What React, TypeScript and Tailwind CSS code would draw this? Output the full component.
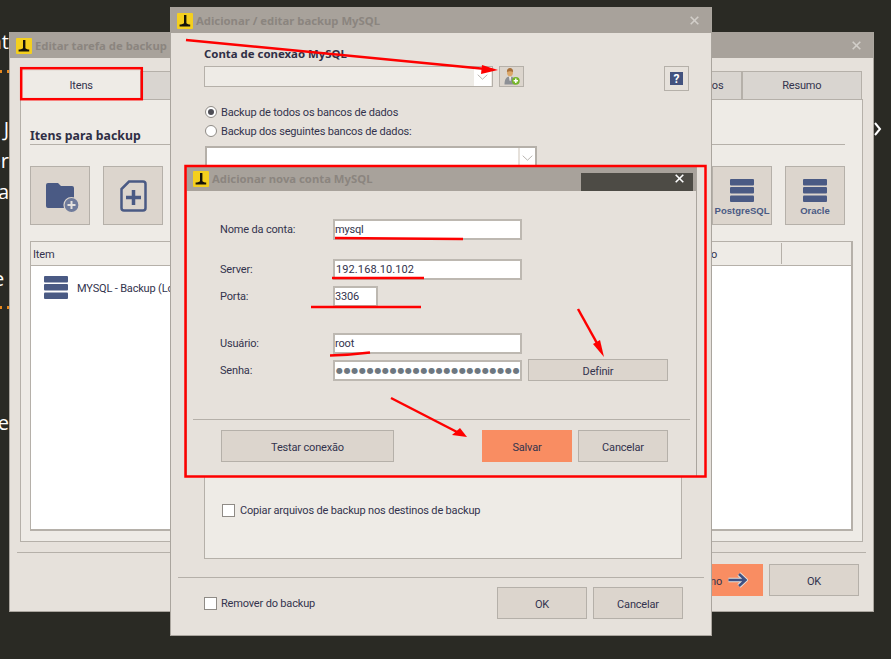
import React from "react";

const Logo = () => (
  <svg width="16" height="16" viewBox="0 0 16 16" className="shrink-0">
    <rect width="16" height="16" rx="1" fill="#f4cf1e" />
    <path d="M7 2h2.400v8.200c1 .8 2.400 1.200 3.800 1.300V13.600H2.600v-2.100c1.500-.1 3.400-.5 4.400-1.300z" fill="#15130b" />
  </svg>
);

const Db = () => (
  <svg width="24" height="23" viewBox="0 0 24 23" className="block">
    <rect x="0" y="0" width="24" height="6.500" rx="1" fill="#4a5a84" />
    <rect x="0" y="8" width="24" height="6.500" rx="1" fill="#4a5a84" />
    <rect x="0" y="16.500" width="24" height="6.500" rx="1" fill="#4a5a84" />
  </svg>
);

const Close = ({ c = "#d2cec9" }: { c?: string }) => (
  <svg width="9" height="9" viewBox="0 0 9 9" className="block">
    <path d="M.7.7l7.600 7.600M8.300.7L.7 8.300" stroke={c} strokeWidth="1.600" />
  </svg>
);

function Win({ title, className, barH, children, close = true }: { title: string; className: string; barH: string; children: React.ReactNode; close?: boolean }) {
  return (
    <div className={`absolute flex flex-col bg-[#e6e1db] border-r border-b border-l border-[#aaa59e] ${className}`}>
      <div className={`flex items-center pl-[6px] pr-[12px] bg-[#a8a29b] shrink-0 ${barH}`}>
        <Logo />
        <span className="ml-[3px] flex-1 text-[11.300px] tracking-normal font-bold text-[#8b857f] whitespace-nowrap font-['Noto_Sans',sans-serif]">{title}</span>
        {close && <span className="block -mt-[2px]"><Close /></span>}
      </div>
      {children}
    </div>
  );
}

const Btn = ({ children, className = "" }: { children: React.ReactNode; className?: string }) => (
  <div className={`flex items-center justify-center border border-[#b5b0a9] bg-[#dcd5cd] pt-[2px] ${className}`}>{children}</div>
);

const Orange = ({ children, className = "" }: { children: React.ReactNode; className?: string }) => (
  <div className={`flex items-center bg-[#f98d62] pt-[2px] ${className}`}>{children}</div>
);

const Field = ({ label, children, className = "" }: { label: string; children: React.ReactNode; className?: string }) => (
  <div className={`flex items-start h-[21px] ${className}`}>
    <span className="w-[113px] pl-[33px] box-content shrink-0 leading-[21px]">{label}</span>
    {children}
  </div>
);

const Input = ({ children, className = "w-[189px]" }: { children?: React.ReactNode; className?: string }) => (
  <div className={`h-[21px] border-2 border-[#bdb8b1] bg-white flex items-center whitespace-nowrap overflow-hidden ${className}`}>{children}</div>
);

const Tab = ({ children }: { children?: React.ReactNode }) => (
  <div className="flex-1 border border-b-0 border-[#b5b0a9] bg-[#d9d5d0] flex items-center justify-center whitespace-nowrap">{children}</div>
);

const Chevron = () => (
  <svg width="11" height="6" viewBox="0 0 11 6"><path d="M.7.7l4.800 4.500L10.300.7" fill="none" stroke="#b9b5b0" strokeWidth="1" /></svg>
);

const Bg = ({ children, className }: { children?: React.ReactNode; className: string }) => (
  <div className={`flex justify-end whitespace-nowrap text-white text-[20px] tracking-normal leading-none ${className}`}>{children}</div>
);

const Dash = ({ className }: { className: string }) => (
  <div className={`flex justify-end gap-[5px] h-[3px] ${className}`}>
    <i className="block w-[3px] h-[3px] bg-[#e8891e]" />
    <i className="block w-[3px] h-[3px] bg-[#e8891e]" />
  </div>
);

const dbBtn = "w-[60px] h-[59px] flex-col !justify-start !pt-[12px] gap-[4px] text-[#4a5a84] text-[9.500px] tracking-normal font-bold font-['Liberation_Sans',sans-serif]";

export default function App() {
  return (
    <div className="relative w-[891px] h-[659px] overflow-hidden bg-[#2a2a24] text-[11px] tracking-[-.17px] leading-none text-[#33334d] font-['Roboto','Noto_Sans',sans-serif]">
      <div className="w-[9px] h-full overflow-hidden font-['Open_Sans',sans-serif]">
        <Bg className="pt-[32px]">nt</Bg>
        <Dash className="mt-[18px]" />
        <Bg className="mt-[46px]">J</Bg>
        <Bg className="mt-[12px]">er</Bg>
        <Bg className="mt-[11px]">ca</Bg>
        <Bg className="mt-[67px] justify-start -translate-x-[7px]">e</Bg>
        <Dash className="mt-[17px]" />
        <Bg className="mt-[104px]">le</Bg>
      </div>
      <svg width="9" height="14" viewBox="0 0 9 14" className="absolute left-[873px] top-[122px]">
        <path d="M2 1l5 6-5 6" fill="none" stroke="#fff" strokeWidth="2" />
      </svg>

      {/* back window */}
      <Win title="Editar tarefa de backup" className="left-[9px] top-[32px] w-[865px] h-[580px]" barH="h-[26px] pt-[2px]">
        <div className="px-[10px] pt-[13px] flex flex-col flex-1">
          <div className="flex h-[28px] pl-[2px] w-[842px]">
            <div className="flex-1 flex items-center justify-center bg-[#eeebe6]">Itens</div>
            <Tab>Destinos</Tab>
            <Tab>Agendamento</Tab>
            <Tab>Opções</Tab>
            <Tab>E-mail</Tab>
            <Tab>Outros processos</Tab>
            <Tab>Resumo</Tab>
          </div>
          <div className="w-[843px] h-[443px] border border-[#b5b0a9] bg-[#eeebe6] px-[9px]">
            <div className="w-[815px] mt-[29px] pb-[1px] h-[14px] border-b border-[#b5b0a9] text-[12.300px] tracking-normal font-bold leading-[14px] text-[#2f2f45] box-content font-['Noto_Sans',sans-serif]">Itens para backup</div>
            <div className="mt-[21px] flex gap-[13px] w-[815px]">
              <Btn className="w-[60px] h-[59px]">
                <svg width="33" height="31" viewBox="0 0 33 31" className="translate-x-[2px] translate-y-[1px]">
                  <path d="M0 3a2 2 0 012-2h10l3 3h11a2 2 0 012 2v20H2a2 2 0 01-2-2z" fill="#4a5a84" />
                  <circle cx="25.500" cy="23" r="7.500" fill="#6f7b9b" stroke="#dcd5cd" strokeWidth="1.200" />
                  <path d="M25.500 19v8M21.500 23h8" stroke="#e4e1de" strokeWidth="2" />
                </svg>
              </Btn>
              <Btn className="w-[60px] h-[59px]">
                <svg width="27" height="32" viewBox="0 0 27 32" className="-translate-y-[1px]">
                  <path d="M9 1.500h14a2.500 2.500 0 012.500 2.500v24a2.500 2.500 0 01-2.500 2.500H4A2.500 2.500 0 011.500 28V9z" fill="none" stroke="#4a5a84" strokeWidth="2.500" />
                  <path d="M13.500 10v15M6 17.500h15" stroke="#4a5a84" strokeWidth="3.500" />
                </svg>
              </Btn>
              <Btn className={`ml-auto ${dbBtn}`}>
                <Db /> <span>PostgreSQL</span>
              </Btn>
              <Btn className={dbBtn}>
                <Db /> <span>Oracle</span>
              </Btn>
            </div>
            <div className="mt-[16px] w-[823px] h-[290px] border-2 border-[#b5b0a9] border-t border-l flex flex-col bg-white">
              <div className="flex h-[24px] bg-[#eeebe6] border-b border-[#b5b0a9]">
                <div className="flex-1 flex items-center pl-[2px] pt-[2px]">Item</div>
                <div className="w-[89px] border-r border-[#b5b0a9] flex items-center pl-[3px] pt-[2px] my-[1px]">Tipo</div>
                <div className="w-[69px]" />
              </div>
              <div className="flex items-center pl-[13px] pt-[10px] gap-[9px]">
                <Db />
                <span className="whitespace-nowrap pt-[1px]">MYSQL - Backup (Local)</span>
              </div>
            </div>
          </div>
          <div className="mt-[10px] -mx-[3px] border-t border-[#b5b0a9] flex justify-end pr-[7px] pt-[11px] gap-[6px]">
            <Orange className="w-[120px] h-[32px] gap-[5px] justify-end pr-[15px]">
              Próximo
              <svg width="21" height="16" viewBox="0 0 21 16" className="-translate-y-[1px]">
                <path d="M1.500 8h17M12 2l6.500 6L12 14" fill="none" stroke="#e6e1db" strokeWidth="4.500" />
                <path d="M1.500 8h17M12 2l6.500 6L12 14" fill="none" stroke="#3f5183" strokeWidth="2.600" />
              </svg>
            </Orange>
            <Btn className="w-[90px] h-[32px]">OK</Btn>
          </div>
        </div>
      </Win>

      {/* middle window */}
      <Win title="Adicionar / editar backup MySQL" className="left-[170px] top-[7px] w-[542px] h-[629px]" barH="h-[26px] pt-[2px]">
        <div className="flex flex-col flex-1">
          <div className="pl-[33px] pr-[22px]">
            <div className="mt-[14px] text-[11.400px] tracking-normal font-bold leading-[14px] text-[#2f2f45] font-['Noto_Sans',sans-serif]">Conta de conexão MySQL</div>
            <div className="mt-[5px] flex items-start">
              <div className="w-[289px] h-[21px] border border-[#b5b0a9] bg-[#eeebe6] flex justify-end">
                <div className="w-[17px] bg-white flex items-center justify-center mr-[1px]"><Chevron /></div>
              </div>
              <Btn className="ml-[6px] w-[25px] h-[21px] !pt-0">
                <svg width="17" height="17" viewBox="0 0 17 17">
                  <path d="M1.500 16.500c0-5 1.500-8 5.500-8s5 3 5.500 8z" fill="#8d9096" />
                  <path d="M6 8.500h2.200l-.6 4-.5.8-.5-.8z" fill="#f2f0ec" />
                  <ellipse cx="7" cy="4.500" rx="3" ry="3.700" fill="#dba768" />
                  <path d="M3.900 4c0-3 1.300-4 3.100-4s3.100 1 3.100 4c-1.800-1-4.400-1-6.200 0z" fill="#a8703a" />
                  <circle cx="12.800" cy="12.800" r="3.900" fill="#75b52a" />
                  <path d="M12.800 10.600v4.400M10.600 12.800h4.400" stroke="#fff" strokeWidth="1.500" />
                </svg>
              </Btn>
              <Btn className="ml-auto w-[25px] h-[25px] !pt-0 !bg-[#e6e1db]">
                <span className="w-[13px] h-[13px] bg-[#43527e] text-white font-bold text-[12px] flex items-center justify-center">?</span>
              </Btn>
            </div>
            <div className="mt-[14px] flex items-center h-[14px] gap-[4px]">
              <span className="w-[12px] h-[12px] ml-[1px] rounded-full border border-[#8f8b86] bg-white flex items-center justify-center">
                <i className="block w-[6px] h-[6px] rounded-full bg-[#4e4e55]" />
              </span>
              Backup de todos os bancos de dados
            </div>
            <div className="mt-[5px] flex items-center h-[14px] gap-[4px]">
              <span className="w-[12px] h-[12px] ml-[1px] rounded-full border border-[#8f8b86] bg-white" />
              Backup dos seguintes bancos de dados:
            </div>
            <div className="mt-[8px] ml-[1px] w-[332px] h-[24px] border-2 border-[#b5b0a9] bg-white flex justify-end">
              <div className="w-[17px] border-l-2 border-[#e6e1db] flex items-center justify-center"><Chevron /></div>
            </div>
          </div>
          <div className="mt-[10px] ml-[33px] w-[478px] h-[379px] border border-[#b5b0a9] bg-[#eeebe6] flex flex-col justify-end pb-[41px] pl-[17px]">
            <div className="flex items-center gap-[5px] h-[14px]">
              <span className="w-[13px] h-[13px] border border-[#8f8b86] bg-white" />
              Copiar arquivos de backup nos destinos de backup
            </div>
          </div>
          <div className="mt-[18px] mx-[7px] border-t border-[#b5b0a9] flex pt-[9px] pl-[26px] pr-[21px] items-start">
            <div className="flex items-center gap-[4px] mt-[9px] h-[14px]">
              <span className="w-[13px] h-[13px] border border-[#8f8b86] bg-white" />
              Remover do backup
            </div>
            <Btn className="ml-auto w-[90px] h-[32px]">OK</Btn>
            <Btn className="ml-[6px] w-[90px] h-[32px]">Cancelar</Btn>
          </div>
        </div>
      </Win>

      {/* front dialog */}
      <Win title="Adicionar nova conta MySQL" className="left-[186px] top-[167px] w-[511px] h-[310px]" barH="h-[24px]" close={false}>
        <div className="absolute left-[394px] top-[6px] w-[112px] h-[18px] bg-[#4d4b45] flex justify-end pr-[9px] pt-[1px]"><Close c="#ffffff" /></div>
        <div className="flex flex-col flex-1">
          <Field label="Nome da conta:" className="mt-[28px]"><Input>mysql</Input></Field>
          <Field label="Server:" className="mt-[19px]"><Input className="w-[189px] pl-[1px] tracking-[.1px]">192.168.10.102</Input></Field>
          <Field label="Porta:" className="mt-[6px]"><Input className="w-[45px]">3306</Input></Field>
          <Field label="Usuário:" className="mt-[26px]"><Input>root</Input></Field>
          <Field label="Senha:" className="mt-[6px]">
            <Input className="w-[189px] pl-[1px] text-[#6d7780] text-[8px] tracking-[.7px] font-['DejaVu_Sans',sans-serif]">●●●●●●●●●●●●●●●●●●●●●●●●●●</Input>
            <Btn className="ml-[6px] -mt-[1px] w-[140px] h-[22px]">Definir</Btn>
          </Field>
          <div className="mt-[38px] mx-[6px] border-t border-[#b5b0a9] flex pt-[10px] pl-[28px] pr-[22px]">
            <Btn className="w-[173px] h-[32px]">Testar conexão</Btn>
            <Orange className="ml-auto w-[90px] h-[32px] justify-center">Salvar</Orange>
            <Btn className="ml-[6px] w-[90px] h-[32px]">Cancelar</Btn>
          </div>
        </div>
      </Win>

      {/* red annotations */}
      <svg width="891" height="659" viewBox="0 0 891 659" className="absolute left-0 top-0 pointer-events-none">
        <g fill="none" stroke="#fe0000">
          <rect x="21.200" y="68.200" width="120.600" height="31" strokeWidth="2.500" />
          <rect x="185.500" y="166" width="520" height="310.500" strokeWidth="2.500" />
          <path d="M186 40L486 69" strokeWidth="2.500" />
          <path d="M335 238l60 .5 68 .5" strokeWidth="2.500" />
          <path d="M332 278h92" strokeWidth="2.500" />
          <path d="M311 307h110" strokeWidth="2.500" />
          <path d="M330 355.500q20-.5 40-3" strokeWidth="2.500" />
          <path d="M578 309l20 36" strokeWidth="2.500" />
          <path d="M391 398l66 34" strokeWidth="2.500" />
        </g>
        <g fill="#fe0000">
          <path d="M498 70l-16-5 -1 9z" />
          <path d="M604 357l-11-13 7-4z" />
          <path d="M467 437l-15-2 8-7z" />
        </g>
      </svg>
    </div>
  );
}
